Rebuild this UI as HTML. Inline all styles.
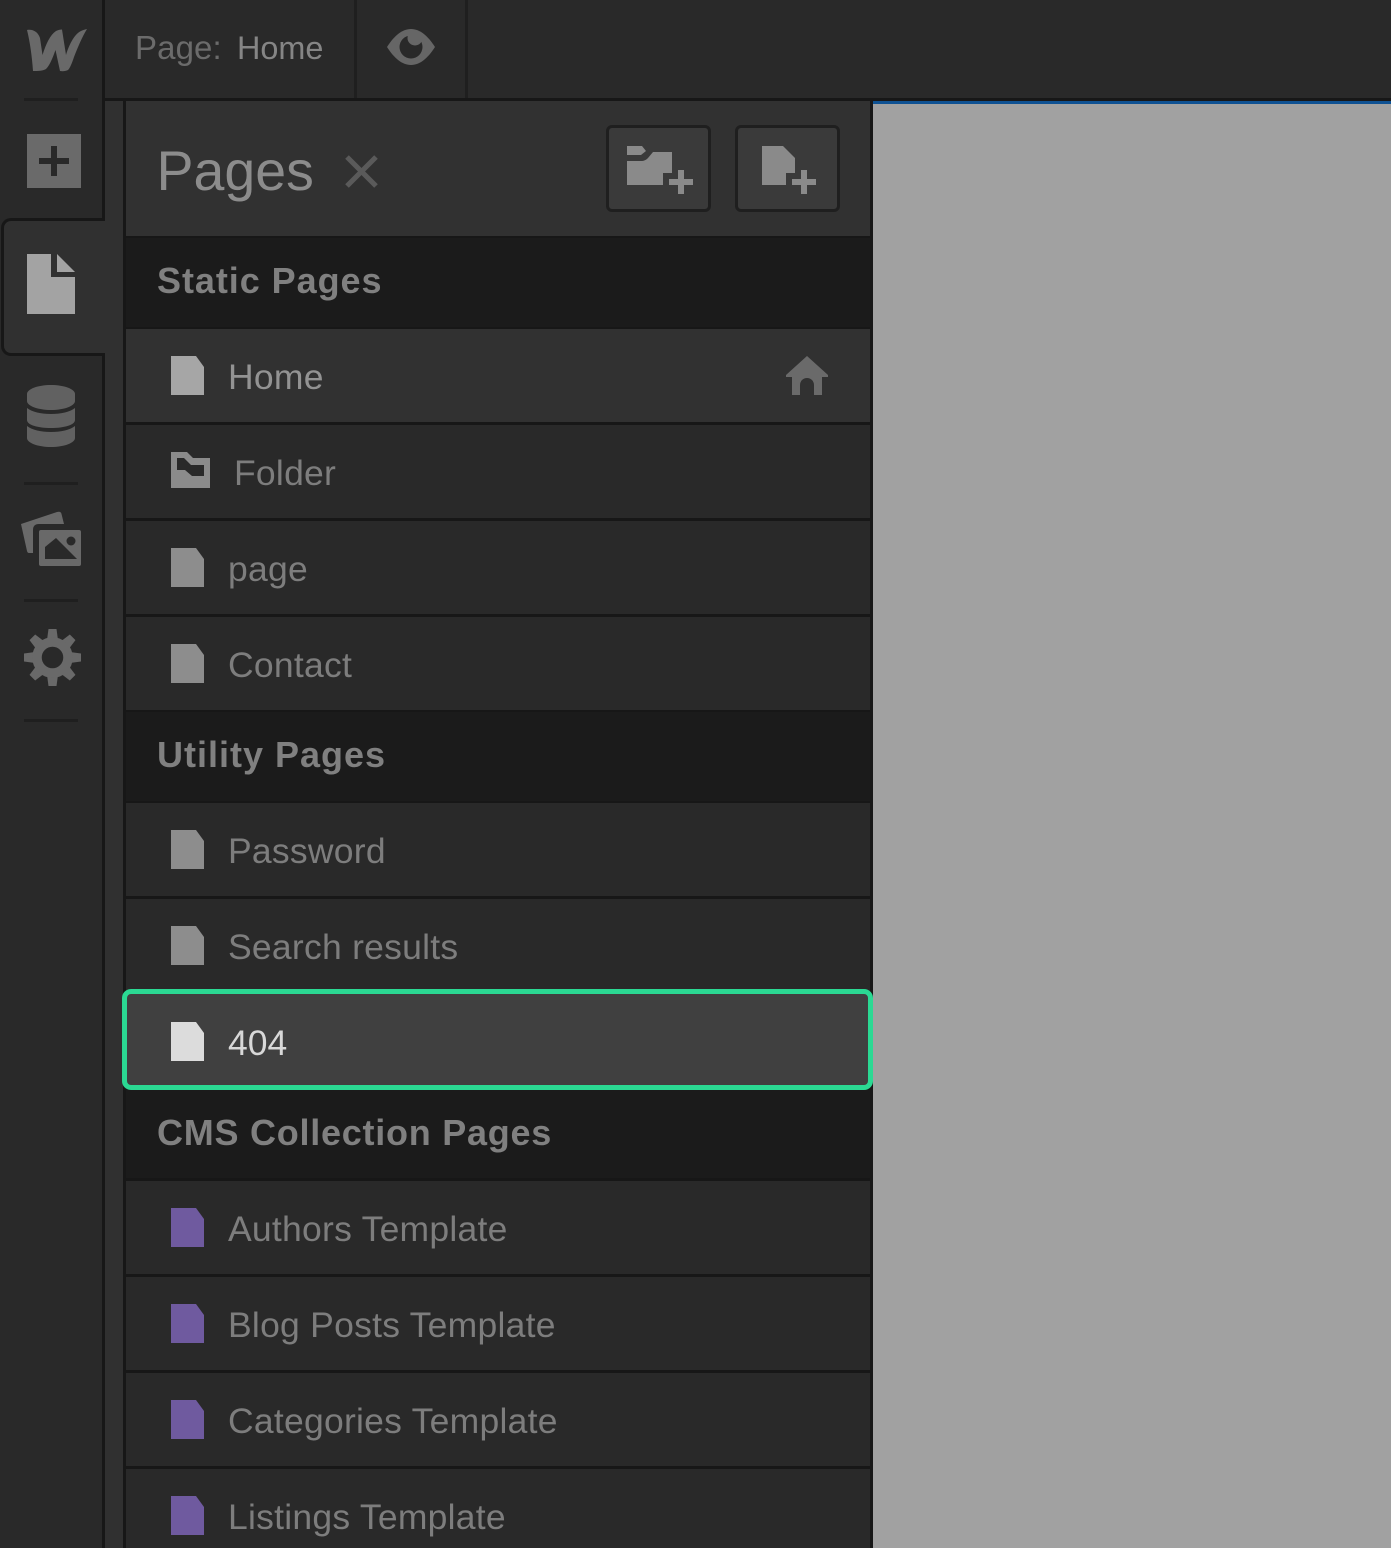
<!DOCTYPE html>
<html lang="en"><head><meta charset="utf-8"><title>Pages</title>
<style>
*{box-sizing:border-box}
html,body{margin:0;padding:0;width:1391px;height:1548px;overflow:hidden;background:#171717}
body{position:relative;font-family:"Liberation Sans",sans-serif}
.b{position:absolute}
.t{position:absolute;white-space:nowrap;line-height:40px;height:40px;font-size:35.5px;letter-spacing:.25px;color:#7d7d7d}
.h{position:absolute;left:157px;white-space:nowrap;line-height:40px;height:40px;font-size:36px;font-weight:700;color:#808080}
svg{position:absolute;left:0;top:0}
</style></head><body>
<div class="b" style="left:0;top:0;width:102px;height:1548px;background:#292929"></div>
<div class="b" style="left:105px;top:0;width:1286px;height:98px;background:#292929"></div>
<div class="b" style="left:354px;top:0;width:3px;height:98px;background:#1f1f1f"></div>
<div class="b" style="left:465px;top:0;width:3px;height:98px;background:#1f1f1f"></div>
<div class="b" style="left:105px;top:101px;width:18px;height:1447px;background:#303030"></div>
<div class="b" style="left:873px;top:101px;width:518px;height:3px;background:#0e5192"></div>
<div class="b" style="left:873px;top:104px;width:518px;height:1444px;background:#a1a1a1"></div>
<!-- active tab -->
<div class="b" style="left:1px;top:218px;width:104px;height:138px;background:#303030;border:3px solid #171717;border-right:0;border-radius:10px 0 0 10px"></div>
<div class="b" style="left:24px;top:98px;width:54px;height:3px;background:#1f1f1f"></div>
<div class="b" style="left:24px;top:482px;width:54px;height:3px;background:#1f1f1f"></div>
<div class="b" style="left:24px;top:599px;width:54px;height:3px;background:#1f1f1f"></div>
<div class="b" style="left:24px;top:719px;width:54px;height:3px;background:#1f1f1f"></div>
<!-- panel -->
<div class="b" style="left:126px;top:101px;width:744px;height:135px;background:#313131"></div>
<div class="b" style="left:126px;top:238px;width:744px;height:89px;background:#1b1b1b"></div>
<div class="b" style="left:126px;top:329px;width:744px;height:93px;background:#313131"></div>
<div class="b" style="left:126px;top:425px;width:744px;height:93px;background:#292929"></div>
<div class="b" style="left:126px;top:521px;width:744px;height:93px;background:#292929"></div>
<div class="b" style="left:126px;top:617px;width:744px;height:93px;background:#292929"></div>
<div class="b" style="left:126px;top:712px;width:744px;height:89px;background:#1b1b1b"></div>
<div class="b" style="left:126px;top:803px;width:744px;height:93px;background:#292929"></div>
<div class="b" style="left:126px;top:899px;width:744px;height:93px;background:#292929"></div>
<div class="b" style="left:126px;top:1090px;width:744px;height:88px;background:#1b1b1b"></div>
<div class="b" style="left:126px;top:1181px;width:744px;height:93px;background:#292929"></div>
<div class="b" style="left:126px;top:1277px;width:744px;height:93px;background:#292929"></div>
<div class="b" style="left:126px;top:1373px;width:744px;height:93px;background:#292929"></div>
<div class="b" style="left:126px;top:1469px;width:744px;height:79px;background:#292929"></div>
<div class="b" style="left:122px;top:989px;width:751px;height:101px;background:#404040;border:5px solid #2bd993;border-radius:9px"></div>
<!-- buttons -->
<div class="b" style="left:606px;top:125px;width:105px;height:87px;background:#3a3a3a;border:3px solid #1f1f1f;border-radius:6px"></div>
<div class="b" style="left:735px;top:125px;width:105px;height:87px;background:#3a3a3a;border:3px solid #1f1f1f;border-radius:6px"></div>

<!-- text -->
<div class="t" style="left:135px;top:28px;font-size:33px;letter-spacing:.1px;color:#6b6b6b">Page:</div>
<div class="t" style="left:237px;top:28px;font-size:32.4px;letter-spacing:0;color:#858585">Home</div>
<div class="t" style="left:156.500px;top:151px;font-size:55.500px;letter-spacing:0;color:#8c8c8c">Pages</div>
<div class="h" style="top:261px;letter-spacing:.95px">Static Pages</div>
<div class="t" style="left:228px;top:357px;color:#939393">Home</div>
<div class="t" style="left:234px;top:453px">Folder</div>
<div class="t" style="left:228px;top:549px">page</div>
<div class="t" style="left:228px;top:645px">Contact</div>
<div class="h" style="top:735px;letter-spacing:1px">Utility Pages</div>
<div class="t" style="left:228px;top:831px">Password</div>
<div class="t" style="left:228px;top:927px">Search results</div>
<div class="t" style="left:228px;top:1023px;letter-spacing:0;color:#d8d8d8">404</div>
<div class="h" style="top:1113px;letter-spacing:.75px">CMS Collection Pages</div>
<div class="t" style="left:228px;top:1209px">Authors Template</div>
<div class="t" style="left:228px;top:1305px">Blog Posts Template</div>
<div class="t" style="left:228px;top:1401px">Categories Template</div>
<div class="t" style="left:228px;top:1497px">Listings Template</div>

<svg width="1391" height="1548" viewBox="0 0 1391 1548" xmlns="http://www.w3.org/2000/svg">
<defs>
<path id="p" d="M0 0H25L33 11V39H0Z"/>
</defs>
<!-- logo -->
<path fill="#696969" d="M27 30C33 29 38 32 40 38L42.500 55C46 44 50 35 56 31C58 30 60 29.500 62 29.500L66 55C69 45 74 35 80 31.500C83 30 85 29.500 87 29C82 37 78 47 74 57C72 63 70 68 68 70C66 71 63 71.500 60 71L55.500 50C53 57 50 65 46 69C43 71 38 71 33 71C32 57 30 42 27 30Z"/>
<!-- eye -->
<path fill="#666" d="M387 47C394 36 402 29 411 29C420 29 428 36 435 47C428 58 420 65 411 65C402 65 394 58 387 47Z"/>
<circle cx="411" cy="47" r="11.500" fill="#292929"/>
<circle cx="415" cy="38" r="7.500" fill="#666"/>
<!-- plus box -->
<path fill="#6a6a6a" fill-rule="evenodd" d="M27 134H81V188H27ZM51 146V158H39V164H51V176H57V164H69V158H57V146Z"/>
<!-- pages tab icon -->
<path fill="#a3a3a3" d="M27 254H51V277H75V314H27Z"/>
<path fill="#a3a3a3" d="M57 254L75 272H57Z"/>
<!-- database -->
<g fill="#616161">
<path d="M27 394C27 389 38 385 51 385C64 385 75 389 75 394V401C75 406 64 410 51 410C38 410 27 406 27 401Z"/>
<path d="M27 408C32 412 41 414 51 414C61 414 70 412 75 408V420C75 425 64 428 51 428C38 428 27 425 27 420Z"/>
<path d="M27 426C32 430 41 432 51 432C61 432 70 430 75 426V438C75 443 64 447 51 447C38 447 27 443 27 438Z"/>
</g>
<!-- images -->
<g fill="#696969">
<path d="M21 524L57 512Q61 511 61.500 514L64 524H39Q33 524 33 530V553H29Q27.500 553 27 551Z"/>
<path fill-rule="evenodd" d="M41 530H79Q81 530 81 532V564Q81 566 79 566H41Q39 566 39 564V532Q39 530 41 530ZM45 559H77L56 538L45 547Z"/>
</g>
<circle cx="71" cy="541" r="4.500" fill="#292929"/>
<!-- gear -->
<g fill="#696969">
<path d="M48.500 629H56.500L58 640H47Z"/>
<path d="M48.500 629H56.500L58 640H47Z" transform="rotate(45 52.500 657.500)"/>
<path d="M48.500 629H56.500L58 640H47Z" transform="rotate(90 52.500 657.500)"/>
<path d="M48.500 629H56.500L58 640H47Z" transform="rotate(135 52.500 657.500)"/>
<path d="M48.500 629H56.500L58 640H47Z" transform="rotate(180 52.500 657.500)"/>
<path d="M48.500 629H56.500L58 640H47Z" transform="rotate(225 52.500 657.500)"/>
<path d="M48.500 629H56.500L58 640H47Z" transform="rotate(270 52.500 657.500)"/>
<path d="M48.500 629H56.500L58 640H47Z" transform="rotate(315 52.500 657.500)"/>
</g>
<circle cx="52.500" cy="657.500" r="15.500" fill="none" stroke="#696969" stroke-width="9.500"/>
<!-- X -->
<path stroke="#5a5a5a" stroke-width="5" fill="none" d="M347 157L376 186M376 157L347 186"/>
<!-- add folder -->
<g fill="#8a8a8a">
<path d="M627 146H642L646 151L641 155H627Z"/>
<path d="M627 161H641C644 161 646 160 648 158L653 152H672V173H663V185H627Z"/>
<path d="M669 179H678V170H684V179H693V185H684V194H678V185H669Z"/>
<!-- add page -->
<path d="M762 146H783L795 158V173H786V185H762Z"/>
<path d="M792 179H801V170H807V179H816V185H807V194H801V185H792Z"/>
</g>
<!-- home -->
<path fill="#6a6a6a" fill-rule="evenodd" d="M807 356L828 375V377H822V395H814V385A7 7 0 0 0 800 385V395H792V377H786V375Z"/>
<!-- row icons -->
<use href="#p" x="171" y="356" fill="#a6a6a6"/>
<path fill="#8b8b8b" fill-rule="evenodd" d="M171 452H187L193 458H210V488H171ZM177 458V470H185L192 476H204V465H191L184 458Z"/>
<use href="#p" x="171" y="548" fill="#8d8d8d"/>
<use href="#p" x="171" y="644" fill="#8d8d8d"/>
<use href="#p" x="171" y="830" fill="#8d8d8d"/>
<use href="#p" x="171" y="926" fill="#8d8d8d"/>
<use href="#p" x="171" y="1022" fill="#dcdcdc"/>
<use href="#p" x="171" y="1208" fill="#6f5a9f"/>
<use href="#p" x="171" y="1304" fill="#6f5a9f"/>
<use href="#p" x="171" y="1400" fill="#6f5a9f"/>
<use href="#p" x="171" y="1496" fill="#6f5a9f"/>
</svg>
</body></html>
